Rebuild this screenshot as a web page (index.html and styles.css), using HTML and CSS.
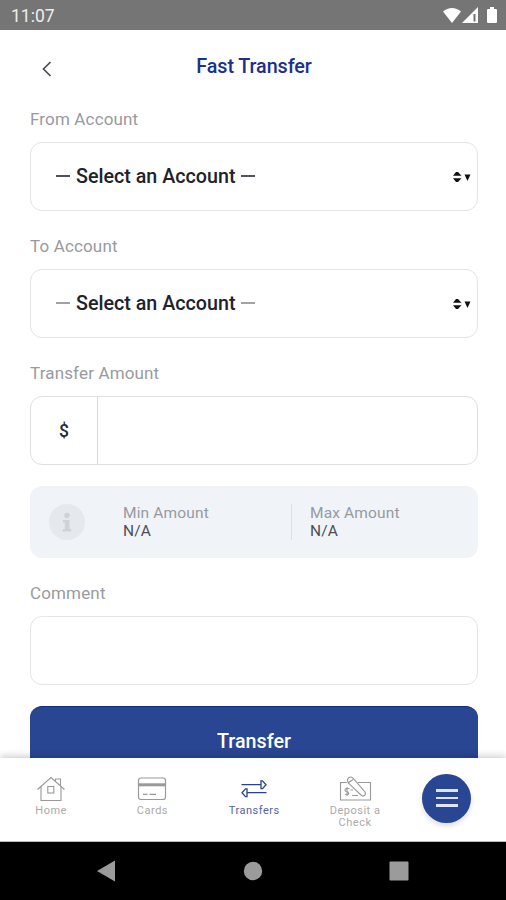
FILE: index.html
```
<!DOCTYPE html>
<html lang="en">
<head>
<meta charset="utf-8">
<title>Fast Transfer</title>
<link rel="stylesheet" href="styles.css">
</head>
<body>
<div class="phone">
  <div class="status">
    <span class="clock">11:07</span>
    <svg class="status-icons" width="58" height="20" viewBox="0 0 58 20" fill="#fff">
      <path d="M2 5.500C7.300 .8 14.700 .8 20 5.500L11 17z"/>
      <path d="M37 1V17H21z"/>
      <path d="M33.500 8V15.500" stroke="#757575" stroke-width="2"/>
      <path d="M47 3h2V1h4v2h2q1 0 1 1v12q0 1-1 1h-8q-1 0-1-1V4q0-1 1-1z"/>
    </svg>
  </div>
  <header class="header">
    <svg class="back" width="12" height="16" viewBox="0 0 12 16" fill="none" stroke="#4a4d58" stroke-width="1.700"><path d="M9.500 1L2.500 8l7 7"/></svg>
    <h1 class="title">Fast Transfer</h1>
  </header>
  <main class="form">
    <div class="label from">From Account</div>
    <div class="field select">
      <span class="choice"><i class="dash"></i><span class="choice-text">Select an Account</span><i class="dash"></i></span>
      <svg width="18" height="12" viewBox="0 0 18 12"><path d="M0 4.800L3 1h2l3.500 3.800zM0 7.200L3 11h2l3.500-3.800zM11.500 3.500h6l-3 6.500z" fill="#111"/></svg>
    </div>
    <div class="label to">To Account</div>
    <div class="field select">
      <span class="choice"><i class="dash light"></i><span class="choice-text">Select an Account</span><i class="dash light"></i></span>
      <svg width="18" height="12" viewBox="0 0 18 12"><path d="M0 4.800L3 1h2l3.500 3.800zM0 7.200L3 11h2l3.500-3.800zM11.500 3.500h6l-3 6.500z" fill="#111"/></svg>
    </div>
    <div class="label amount-label">Transfer Amount</div>
    <div class="field amount"><span class="currency">$</span></div>
    <div class="info">
      <svg class="info-icon" width="36" height="36" viewBox="0 0 36 36"><circle cx="18" cy="18" r="18" fill="#e5e8ec"/><g fill="#d0d2d6"><circle cx="18" cy="11.500" r="2.800"/><path d="M14 16H20.500V25H22.200V27.500H13.800V25H15.800V18.500H14z"/></g></svg>
      <div class="limit min"><span class="limit-name">Min Amount</span><span class="limit-value">N/A</span></div>
      <div class="limit max"><span class="limit-name">Max Amount</span><span class="limit-value">N/A</span></div>
    </div>
    <div class="label comment">Comment</div>
    <div class="field"></div>
    <div class="submit">Transfer</div>
  </main>
  <nav class="tabs">
    <div class="tab">
      <svg width="32" height="28" viewBox="0 0 32 28" fill="none" stroke="#999" stroke-width="1.100"><path d="M2.500 14.500L16 2.500L29.500 14.500M6 11.500V25.500H26V11.500M20.500 6.500V4H25.500V11"/><rect x="12.800" y="11.500" width="6" height="6.500"/></svg>
      <span class="home">Home</span>
    </div>
    <div class="tab">
      <svg width="32" height="28" viewBox="0 0 32 28" fill="none" stroke="#999" stroke-width="1.200"><rect x="2.500" y="3" width="27" height="21.500" rx="2.500"/><path d="M2.500 9.800h27" stroke-width="3"/><path d="M7 19.300h4.500M13.500 19.300H20"/></svg>
      <span class="cards">Cards</span>
    </div>
    <div class="tab active">
      <svg width="32" height="28" viewBox="0 0 32 28" fill="none" stroke="#27408f" stroke-width="1.300"><path d="M3.500 9.700H23V5.800h1.500l3.500 3.900-3.500 3.900H23V9.700M28.500 17.700H9v-3.900H7.500l-3.500 3.900 3.500 3.900H9v-3.900"/></svg>
      <span class="transfers">Transfers</span>
    </div>
    <div class="tab">
      <svg width="34" height="28" viewBox="0 0 34 28" fill="none" stroke="#999" stroke-width="1.100"><path d="M9 7.500H2.500V25H32.500V7.500H20"/><path d="M10.200 7.800L23.500 20.500q1.500 1 3 0t.5-3.500L15.700 3.800Q13.500 1 11 2.500T10.200 7.800L15 4.500"/><path d="M11.500 13.500H8.500q-1.500 0-1.500 1.500t1.500 1.500 2 1.500-1.500 1.500H7M9 12v9M12.500 15h2.500M14 20.500h6"/></svg>
      <span class="deposit">Deposit a<br>Check</span>
    </div>
    <div class="menu"><i></i><i></i><i></i></div>
  </nav>
  <footer class="system">
    <svg width="20" height="24" viewBox="0 0 20 24"><path d="M1 12L19 1.500V22.500z" fill="#9b9b9b"/></svg>
    <svg width="20" height="24" viewBox="0 0 20 24"><circle cx="10" cy="12" r="9.200" fill="#9b9b9b"/></svg>
    <svg width="20" height="24" viewBox="0 0 20 24"><rect x=".5" y="2.500" width="19" height="19" rx="1" fill="#9b9b9b"/></svg>
  </footer>
</div>
</body>
</html>
```
FILE: styles.css
```
* { box-sizing: border-box; }
body { margin: 0; font-family: Roboto, "Liberation Sans", sans-serif; background: #fff; }
svg { display: block; flex: none; }
.phone { width: 506px; height: 900px; overflow: hidden; display: flex; flex-direction: column; }
.status { height: 30px; flex: none; background: #757575; color: #eee; display: flex; justify-content: space-between; padding: 6px 7px 0 11px; }
.clock { font-size: 17.5px; line-height: 20px; }
.header { height: 79px; flex: none; display: grid; grid-template-columns: 60px 1fr 60px; padding: 0 0 0 2px; }
.back { margin: 31px 0 0 39px; }
.title { margin: 26px 0 0; text-align: center; font-size: 19.8px; line-height: 22px; font-weight: 500; color: #202f8c; letter-spacing: -.1px; }
.form { flex: 1; min-height: 0; padding: 0 28px 0 30px; overflow: hidden; }
.label { height: 20px; line-height: 20px; margin: 25px 0 13px; font-size: 17px; color: #999a9f; letter-spacing: .15px; white-space: nowrap; }
.label.from { margin-top: 0; }
.field { height: 69px; margin-top: 0; border: 1.5px solid #e5e5e7; border-radius: 12px; background: #fff; }
.select { display: flex; align-items: center; justify-content: space-between; padding: 0 6px 0 25px; }
.choice { display: flex; align-items: center; gap: 6px; font-size: 19.7px; line-height: 24px; font-weight: 500; color: #20232c; white-space: nowrap; }
.choice-text { margin-top: 1px; }
.dash { width: 14px; height: 1.5px; margin-top: -1px; background: #50535a; }
.dash.light { height: 2px; background: #a0a2a5; }
.amount { border-color: #dfe0e3; }
.currency { display: flex; align-items: center; justify-content: center; width: 67px; height: 100%; border-right: 1px solid #dadbe2; font-size: 17.5px; font-weight: 500; color: #272b32; }
.info { height: 72px; margin-top: 21px; border-radius: 12px; background: #f0f4f8; display: flex; align-items: center; padding-left: 19px; }
.info-icon { margin-top: -1px; }
.limit { height: 36px; display: flex; flex-direction: column; font-size: 15.5px; line-height: 18px; white-space: nowrap; letter-spacing: .15px; }
.min { width: 169px; margin-left: 38px; border-right: 1px solid #dce0e5; }
.max { margin-left: 18px; }
.limit-name { color: #969aa1; }
.limit-value { color: #4b4e5a; }
.submit { height: 70px; margin-top: 21px; border-radius: 12px; background: #294693; border-top: 1px solid #142a7e; color: #fff; text-align: center; font-size: 19.7px; font-weight: 500; line-height: 69px; }
.tabs { height: 84px; flex: none; display: grid; grid-template-columns: repeat(4, 101.3px) 1fr; background: #fff; box-shadow: 0 -2px 7px #0003; position: relative; border-bottom: 1px solid #bbb; }
.tab { display: flex; flex-direction: column; align-items: center; padding: 17px 0 0 1px; font-size: 11px; line-height: 12px; color: #aaa; text-align: center; letter-spacing: .5px; white-space: nowrap; }
.tab span { margin-top: 2px; }
.tab.active { color: #5363a5; padding-left: 2px; }
.menu { width: 49px; height: 49px; margin: 15.500px 0 0 17px; border-radius: 50%; background: #294693; display: flex; flex-direction: column; align-items: center; justify-content: center; gap: 5px; box-shadow: 0 3px 5px #0002; }
.menu i { width: 22px; height: 2.700px; background: #dce4ff; }
.system { height: 58px; flex: none; background: #000; display: flex; justify-content: space-between; padding: 17px 97px 0 96px; }
```
